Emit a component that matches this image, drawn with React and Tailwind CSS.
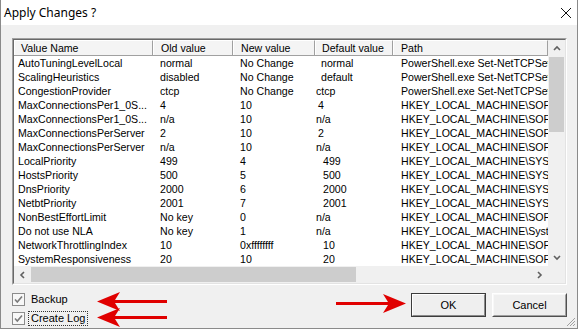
import React from 'react';

const rows = [
  ['AutoTuningLevelLocal', 'normal', 'No Change', 'normal', 'pl-[6px]', 'PowerShell.exe Set-NetTCPSetting -SettingName InternetCustom'],
  ['ScalingHeuristics', 'disabled', 'No Change', 'default', 'pl-[6px]', 'PowerShell.exe Set-NetTCPSetting -SettingName InternetCustom'],
  ['CongestionProvider', 'ctcp', 'No Change', 'ctcp', 'pl-[1px]', 'PowerShell.exe Set-NetTCPSetting -SettingName InternetCustom'],
  ['MaxConnectionsPer1_0S...', '4', '10', '4', 'pl-[3px]', 'HKEY_LOCAL_MACHINE\\SOFTWARE\\Microsoft\\Internet Explorer'],
  ['MaxConnectionsPer1_0S...', 'n/a', '10', 'n/a', 'pl-[1px]', 'HKEY_LOCAL_MACHINE\\SOFTWARE\\Wow6432Node\\Microsoft'],
  ['MaxConnectionsPerServer', '2', '10', '2', 'pl-[3px]', 'HKEY_LOCAL_MACHINE\\SOFTWARE\\Microsoft\\Internet Explorer'],
  ['MaxConnectionsPerServer', 'n/a', '10', 'n/a', 'pl-[1px]', 'HKEY_LOCAL_MACHINE\\SOFTWARE\\Wow6432Node\\Microsoft'],
  ['LocalPriority', '499', '4', '499', 'pl-[8px]', 'HKEY_LOCAL_MACHINE\\SYSTEM\\CurrentControlSet\\Services'],
  ['HostsPriority', '500', '5', '500', 'pl-[8px]', 'HKEY_LOCAL_MACHINE\\SYSTEM\\CurrentControlSet\\Services'],
  ['DnsPriority', '2000', '6', '2000', 'pl-[8px]', 'HKEY_LOCAL_MACHINE\\SYSTEM\\CurrentControlSet\\Services'],
  ['NetbtPriority', '2001', '7', '2001', 'pl-[8px]', 'HKEY_LOCAL_MACHINE\\SYSTEM\\CurrentControlSet\\Services'],
  ['NonBestEffortLimit', 'No key', '0', 'n/a', 'pl-[1px]', 'HKEY_LOCAL_MACHINE\\SOFTWARE\\Policies\\Microsoft'],
  ['Do not use NLA', 'No key', '1', 'n/a', 'pl-[1px]', 'HKEY_LOCAL_MACHINE\\System\\CurrentControlSet\\Services'],
  ['NetworkThrottlingIndex', '10', '0xffffffff', '10', 'pl-[8px]', 'HKEY_LOCAL_MACHINE\\SOFTWARE\\Microsoft\\Windows NT'],
  ['SystemResponsiveness', '20', '10', '20', 'pl-[8px]', 'HKEY_LOCAL_MACHINE\\SOFTWARE\\Microsoft\\Windows NT'],
];

const Chevron = ({ dir }) => {
  const pts = {
    up: '1,5 4,2 7,5',
    down: '1,2 4,5 7,2',
    left: '5,1 2,4 5,7',
    right: '2,1 5,4 2,7',
  };
  return (
    <svg width="8" height="8" viewBox="0 0 8 8">
      <polyline points={pts[dir]} fill="none" stroke="#606060" strokeWidth="1.6" />
    </svg>
  );
};

const Check = () => (
  <svg width="13" height="13" viewBox="0 0 13 13" className="shrink-0">
    <rect x="0.5" y="0.5" width="12" height="12" fill="#f7f7f7" stroke="#8c8c8c" />
    <polyline points="3,6.5 5.3,9 10,3.5" fill="none" stroke="#7a7a7a" strokeWidth="1.6" />
  </svg>
);

const Arrow = ({ flip, className }) => (
  <svg width="70" height="19" viewBox="0 0 70 19" className={className}>
    <polygon
      transform={flip ? 'translate(70,0) scale(-1,1)' : undefined}
      points="0,9.5 23,0 18,8 70,8 70,11 18,11 23,19"
      fill="#e00000"
    />
  </svg>
);

export default function App() {
  return (
    <div className="relative w-[578px] h-[329px] flex flex-col bg-[#f0f0f0] border-x border-b border-[#8a8a8a] font-['Liberation_Sans',Arial,sans-serif] text-[11px] text-black overflow-hidden">
      <div className="h-[25px] shrink-0 bg-white flex items-center justify-between pl-[3px] pr-[4px]">
        <span className="font-['Noto_Sans',sans-serif] text-[12px] text-black">Apply Changes ?</span>
        <svg width="12" height="12" viewBox="0 0 12 12" className="mr-[1px]">
          <path d="M1 1 L11 11 M11 1 L1 11" stroke="#111" strokeWidth="1" />
        </svg>
      </div>

      <div className="ml-[11px] mt-[13px] w-[555px] h-[247px] border-t border-l border-[#a0a0a0] border-b border-r border-b-white border-r-white">
        <div className="w-full h-full border border-[#696969] border-b-[#e3e3e3] border-r-[#e3e3e3] bg-white grid grid-cols-[534px_17px] grid-rows-[226px_17px] text-[10.6px]">
          <div className="overflow-hidden flex flex-col">
            <div className="h-[16px] shrink-0 flex bg-[#f4f4f4] border-b border-[#a0a0a0] leading-[15px]">
              {[
                ['Value Name', 'w-[139px] pl-[6px]'],
                ['Old value', 'w-[80px] pl-[7px]'],
                ['New value', 'w-[82px] pl-[7px]'],
                ['Default value', 'w-[78px] pl-[6px]'],
                ['Path', 'flex-1 pl-[7px]'],
              ].map(([t, c]) => (
                <div key={t} className={`${c} shrink-0 border-t border-l border-white border-r border-r-[#a0a0a0] whitespace-nowrap overflow-hidden`}>
                  {t}
                </div>
              ))}
            </div>
            {rows.map((r, i) => (
              <div key={i} className="h-[14px] shrink-0 flex leading-[14px] whitespace-nowrap">
                <div className="w-[139px] shrink-0 pl-[4px] overflow-hidden">{r[0]}</div>
                <div className="w-[80px] shrink-0 pl-[7px] overflow-hidden">{r[1]}</div>
                <div className="w-[82px] shrink-0 pl-[7px] overflow-hidden">{r[2]}</div>
                <div className={`w-[78px] shrink-0 ${r[4]} overflow-hidden`}>{r[3]}</div>
                <div className="flex-1 pl-[8px] overflow-hidden">{r[5]}</div>
              </div>
            ))}
          </div>

          <div className="bg-[#f0f0f0] flex flex-col">
            <div className="h-[17px] flex items-center justify-center"><Chevron dir="up" /></div>
            <div className="h-[75px] mx-[1px] bg-[#cdcdcd]" />
            <div className="flex-1" />
            <div className="h-[17px] flex items-center justify-center"><Chevron dir="down" /></div>
          </div>

          <div className="bg-[#f0f0f0] flex items-stretch">
            <div className="w-[17px] flex items-center justify-center"><Chevron dir="left" /></div>
            <div className="w-[325px] my-[1px] bg-[#cdcdcd]" />
            <div className="flex-1" />
            <div className="w-[17px] flex items-center justify-center"><Chevron dir="right" /></div>
          </div>
          <div className="bg-[#f0f0f0]" />
        </div>
      </div>

      <div className="flex flex-1 pl-[11px] pr-[10px] pt-[7px]">
        <div className="flex flex-col gap-[4px]">
          <div className="flex items-center gap-[5px] h-[14px]">
            <Check />
            <span className="px-[1px]">Backup</span>
          </div>
          <div className="flex items-center gap-[3px] h-[16px]">
            <Check />
            <span className="px-[2px] leading-[13px] border border-dotted border-[#333]">Create Log</span>
          </div>
        </div>
        <div className="flex-1" />
        <div className="flex gap-[6px] pt-[1px]">
          <button className="w-[75px] h-[24px] border border-[#3c3c3c]">
            <div className="w-full h-full border border-white border-b-[#8a8a8a] border-r-[#8a8a8a] bg-[#efefef] flex items-center justify-center">OK</div>
          </button>
          <button className="w-[75px] h-[24px] border border-white border-b-[#505050] border-r-[#505050]">
            <div className="w-full h-full border border-[#f8f8f8] border-b-[#a0a0a0] border-r-[#a0a0a0] bg-[#efefef] flex items-center justify-center">Cancel</div>
          </button>
        </div>
      </div>

      <Arrow className="absolute left-[96px] top-[292px]" />
      <Arrow className="absolute left-[96px] top-[308px]" />
      <Arrow flip className="absolute left-[335px] top-[294px]" />

      <svg width="12" height="12" viewBox="0 0 12 12" className="absolute right-[1px] bottom-[1px]">
        <path d="M11 3 L3 11 M11 6 L6 11 M11 9 L9 11" stroke="#a0a0a0" strokeWidth="1" />
      </svg>
    </div>
  );
}
